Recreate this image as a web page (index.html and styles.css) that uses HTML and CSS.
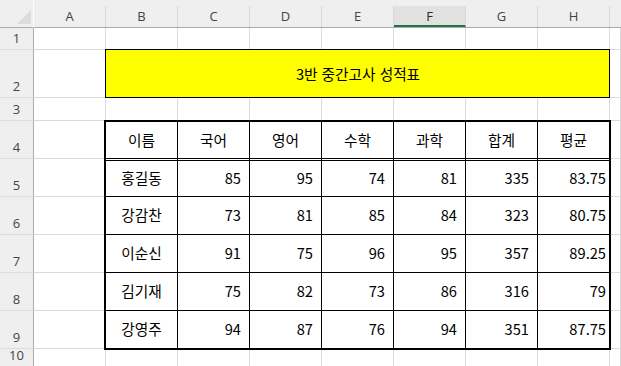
FILE: index.html
```html
<!DOCTYPE html>
<html lang="ko">
<head>
<meta charset="utf-8">
<title>3반 중간고사 성적표</title>
<link rel="stylesheet" href="styles.css">
</head>
<body>
<div class="sheet">
  <div class="corner">
    <svg class="corner-tri" width="34" height="27" viewBox="0 0 34 27"><polygon points="31,10 31,24 17,24" fill="#dcdcdc"/></svg>
  </div>
  <div class="colhead"><span>A</span></div>
  <div class="colhead"><span>B</span></div>
  <div class="colhead"><span>C</span></div>
  <div class="colhead"><span>D</span></div>
  <div class="colhead"><span>E</span></div>
  <div class="colhead selected"><span>F</span></div>
  <div class="colhead"><span>G</span></div>
  <div class="colhead"><span>H</span></div>
  <div class="colhead last"><span></span></div>

  <div class="rowhead r1">1</div>
  <div class="rowhead r2">2</div>
  <div class="rowhead r3">3</div>
  <div class="rowhead r4">4</div>
  <div class="rowhead r5">5</div>
  <div class="rowhead r6">6</div>
  <div class="rowhead r7">7</div>
  <div class="rowhead r8">8</div>
  <div class="rowhead r9">9</div>
  <div class="rowhead r10">10</div>

  <!-- row 1 -->
  <div class="cell"></div><div class="cell"></div><div class="cell"></div><div class="cell"></div><div class="cell"></div><div class="cell"></div><div class="cell"></div><div class="cell"></div><div class="cell"></div>
  <!-- row 2: A and I (B:H merged title) -->
  <div class="cell"></div><div class="cell"></div>
  <!-- row 3 -->
  <div class="cell"></div><div class="cell"></div><div class="cell"></div><div class="cell"></div><div class="cell"></div><div class="cell"></div><div class="cell"></div><div class="cell"></div><div class="cell"></div>
  <!-- rows 4-9: A and I -->
  <div class="cell"></div><div class="cell"></div>
  <div class="cell"></div><div class="cell"></div>
  <div class="cell"></div><div class="cell"></div>
  <div class="cell"></div><div class="cell"></div>
  <div class="cell"></div><div class="cell"></div>
  <div class="cell"></div><div class="cell"></div>
  <!-- row 10 -->
  <div class="cell"></div><div class="cell"></div><div class="cell"></div><div class="cell"></div><div class="cell"></div><div class="cell"></div><div class="cell"></div><div class="cell"></div><div class="cell"></div>

  <div class="title">3반 중간고사 성적표</div>

  <div class="scores">
    <div class="th">이름</div><div class="th">국어</div><div class="th">영어</div><div class="th">수학</div><div class="th">과학</div><div class="th">합계</div><div class="th end">평균</div>

    <div class="name">홍길동</div><div class="num">85</div><div class="num">95</div><div class="num">74</div><div class="num">81</div><div class="num">335</div><div class="num avg end">83.75</div>
    <div class="name">강감찬</div><div class="num">73</div><div class="num">81</div><div class="num">85</div><div class="num">84</div><div class="num">323</div><div class="num avg end">80.75</div>
    <div class="name">이순신</div><div class="num">91</div><div class="num">75</div><div class="num">96</div><div class="num">95</div><div class="num">357</div><div class="num avg end">89.25</div>
    <div class="name">김기재</div><div class="num">75</div><div class="num">82</div><div class="num">73</div><div class="num">86</div><div class="num">316</div><div class="num avg end">79</div>
    <div class="name bottom">강영주</div><div class="num bottom">94</div><div class="num bottom">87</div><div class="num bottom">76</div><div class="num bottom">94</div><div class="num bottom">351</div><div class="num avg end bottom">87.75</div>
  </div>
</div>
</body>
</html>
```
FILE: styles.css
```css
* { box-sizing: border-box; }
html, body { margin: 0; padding: 0; background: #fff; }
body { width: 621px; height: 366px; overflow: hidden; }

.sheet {
  display: grid;
  grid-template-columns: 34px repeat(8, 72px) 11px;
  grid-template-rows: 28px 22px 48px 23px repeat(6, 38px) 18px;
  width: 621px;
  height: 366px;
  font-family: "Noto Sans CJK KR", "Noto Sans", sans-serif;
  color: #000;
}

.corner {
  grid-column: 1;
  grid-row: 1;
  background: #efefef;
  border-bottom: 1px solid #ababab;
  border-right: 1px solid #fafafa;
}
.corner-tri { display: block; }

.colhead {
  background: #efefef;
  border-bottom: 1px solid #ababab;
  padding-top: 6px;
  font-family: "Open Sans", "Noto Sans", sans-serif;
  font-size: 13px;
  color: #444;
}
.colhead span {
  display: flex;
  height: 100%;
  align-items: center;
  justify-content: center;
  border-right: 1px solid #d9d9d9;
  padding-bottom: 1px;
}
.colhead.selected span {
  background: #e1e1e1;
  border-bottom: 2px solid #217346;
  color: #2b2b2b;
  padding-bottom: 0;
}
.colhead.last span { border-right: none; }

.rowhead {
  grid-column: 1;
  background: #efefef;
  border-right: 1px solid #ababab;
  border-bottom: 1px solid #dcdcdc;
  display: flex;
  align-items: flex-end;
  justify-content: center;
  font-family: "Open Sans", "Noto Sans", sans-serif;
  font-size: 13px;
  line-height: 13px;
  padding-bottom: 4px;
  color: #444;
}
.r1 { grid-row: 2; }
.r2 { grid-row: 3; }
.r3 { grid-row: 4; }
.r4 { grid-row: 5; }
.r5 { grid-row: 6; }
.r6 { grid-row: 7; }
.r7 { grid-row: 8; }
.r8 { grid-row: 9; }
.r9 { grid-row: 10; }
.r10 { grid-row: 11; }

.cell {
  border-right: 1px solid #dadada;
  border-bottom: 1px solid #dadada;
}

.title {
  grid-column: 3 / 10;
  grid-row: 3;
  margin: -1px 0 0 -1px;
  background: #ffff00;
  border: 1px solid #000;
  display: flex;
  align-items: center;
  justify-content: center;
  font-size: 14.67px;
  padding-left: 1px;
}

.scores {
  grid-column: 3 / 10;
  grid-row: 5 / 11;
  margin: -1px -1px -1px -2px;
  background: #fff;
  border: 2px solid #000;
  display: grid;
  grid-template-columns: repeat(6, 72px) 71px;
  grid-template-rows: 39px 36px 38px 38px 38px 37px;
  font-size: 14.67px;
}

.scores > div {
  display: flex;
  align-items: center;
  border-right: 1px solid #000;
  border-bottom: 1px solid #000;
  line-height: 1;
}
.scores > .end { border-right: none; }
.scores > .bottom { border-bottom: none; }

.th {
  justify-content: center;
  border-bottom: 3px double #000 !important;
}
.name { justify-content: center; }
.num {
  justify-content: flex-end;
  padding-right: 8px;
}
.num.avg { padding-right: 3px; }
```
